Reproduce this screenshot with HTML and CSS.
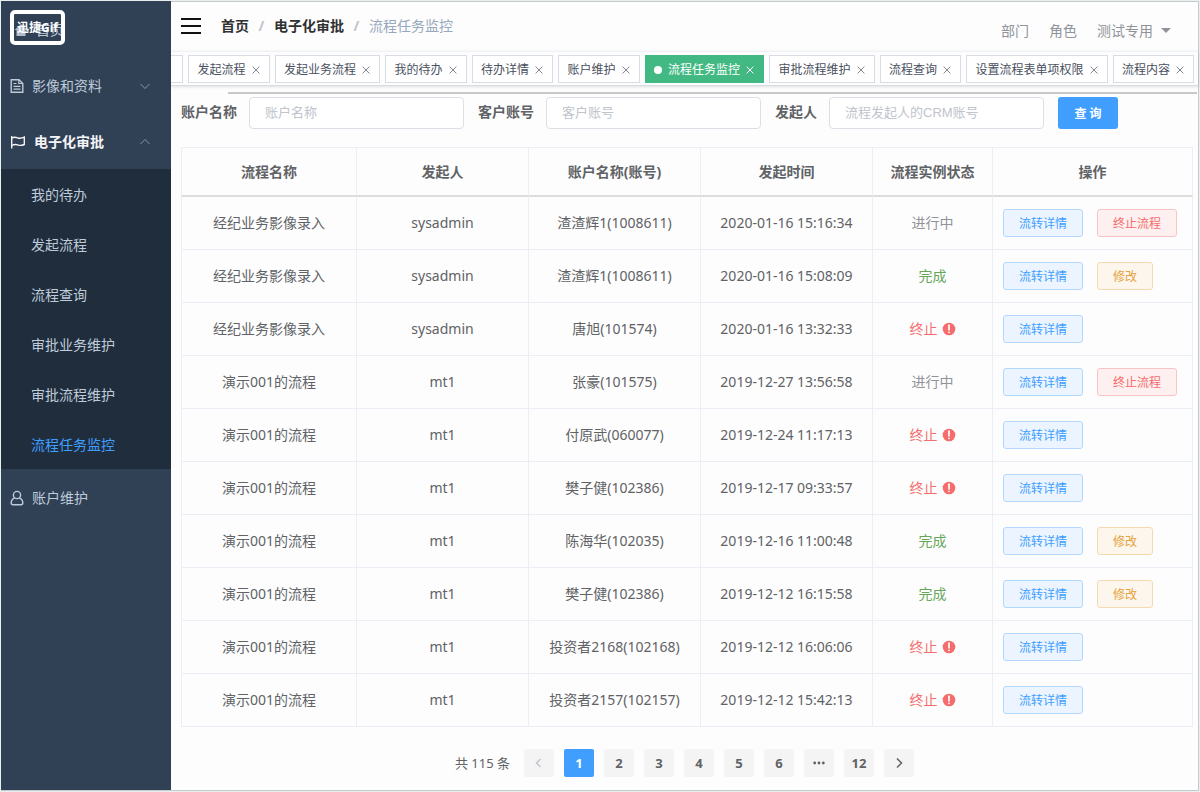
FILE: index.html
```
<!DOCTYPE html>
<html lang="zh-CN">
<head>
    <meta charset="UTF-8">
    <meta name="viewport" content="width=device-width, initial-scale=1.0">
    <title>流程任务监控</title>
    <link rel="stylesheet" href="styles.css">
</head>
<body>

<svg class="sprite" width="0" height="0">
    <symbol id="i-down" viewBox="0 0 12 12"><path d="M1.5 4 6 8.5 10.5 4" fill="none" stroke="currentColor"/></symbol>
    <symbol id="i-up" viewBox="0 0 12 12"><path d="M1.5 8 6 3.5 10.5 8" fill="none" stroke="currentColor"/></symbol>
    <symbol id="i-close" viewBox="0 0 8 8"><path d="M.6.6 7.4 7.4M7.4.6.6 7.4" fill="none" stroke="currentColor"/></symbol>
    <symbol id="i-warn" viewBox="0 0 14 14"><circle cx="7" cy="7" r="6.3" fill="currentColor"/><path d="M7 3.2V7.8" stroke="#fff" stroke-width="1.7" stroke-linecap="round"/><circle cx="7" cy="10.3" r=".9" fill="#fff"/></symbol>
</svg>

<div class="app">
    <nav class="sidebar">
        <div class="logo">
            <a class="home" href="#">
                <svg width="14" height="14" viewBox="0 0 14 14"><path d="M7 1 13.5 7H11.5V13H2.5V7H.5Z" fill="#b4bccc"/></svg>
                首页
            </a>
            <span class="mark">迅捷Gif</span>
        </div>
        <a class="menu-item" href="#">
            <svg width="14" height="16" viewBox="0 0 14 16" fill="none" stroke="currentColor" stroke-width="1.4"><path d="M1.2 1.7H9L12.8 5.5V14.3H1.2Z"/><path d="M8.8 1.7V5.5H12.8M3.5 5.5H6.5M3.5 8.3H10.5M3.5 11.2H10.5" stroke-width="1.2"/></svg>
            <span>影像和资料</span>
            <svg class="arrow" width="12" height="12"><use href="#i-down"/></svg>
        </a>
        <a class="menu-item opened" href="#">
            <svg width="16" height="14" viewBox="0 0 16 14" fill="none" stroke="currentColor" stroke-width="1.4"><path d="M1.7 1V13.5"/><path d="M1.7 3.2C4 1.8 5.5 2 7.500 2.800S11.500 3.500 14.300 2.200V9.500C11.500 10.800 9.500 10.500 7.500 9.800S4 9.300 1.700 10.500"/></svg>
            <span>电子化审批</span>
            <svg class="arrow" width="12" height="12"><use href="#i-up"/></svg>
        </a>
        <div class="submenu">
            <a href="#">我的待办</a>
            <a href="#">发起流程</a>
            <a href="#">流程查询</a>
            <a href="#">审批业务维护</a>
            <a href="#">审批流程维护</a>
            <a href="#" class="current">流程任务监控</a>
        </div>
        <a class="menu-item" href="#">
            <svg width="14" height="16" viewBox="0 0 14 16" fill="none" stroke="currentColor" stroke-width="1.4"><circle cx="7" cy="5" r="3.6"/><path d="M4.7 7.8C2.5 8.8 1.2 10.5 1.2 12.8C1.2 14.2 1.7 14.7 3 14.7H11C12.3 14.7 12.8 14.2 12.8 12.8C12.8 10.5 11.5 8.8 9.3 7.8"/></svg>
            <span>账户维护</span>
        </a>
    </nav>

    <main class="main">
        <header class="navbar">
            <button class="hamburger" aria-label="菜单"><i></i><i></i><i></i></button>
            <div class="breadcrumb">
                <a href="#">首页</a><b>/</b><a href="#">电子化审批</a><b>/</b><span>流程任务监控</span>
            </div>
            <div class="user">
                <span>部门</span>
                <span>角色</span>
                <button class="user-name">测试专用 <i class="caret"></i></button>
            </div>
        </header>

        <div class="tags" id="tags"></div>

        <div class="scroll-line"></div>

        <div class="content">
            <form class="filter">
                <label for="account">账户名称</label>
                <input type="text" id="account" placeholder="账户名称">
                <label for="client">客户账号</label>
                <input type="text" id="client" placeholder="客户账号">
                <label for="starter">发起人</label>
                <input type="text" id="starter" placeholder="流程发起人的CRM账号">
                <button type="button" class="search-btn">查 询</button>
            </form>

            <table>
                <colgroup>
                    <col class="col-name"><col class="col-mid"><col class="col-mid"><col class="col-mid"><col class="col-state"><col class="col-action">
                </colgroup>
                <thead>
                    <tr>
                        <th>流程名称</th>
                        <th>发起人</th>
                        <th>账户名称(账号)</th>
                        <th>发起时间</th>
                        <th>流程实例状态</th>
                        <th>操作</th>
                    </tr>
                </thead>
                <tbody id="rows"></tbody>
            </table>

            <div class="pagination">
                <span class="total">共 115 条</span>
                <button disabled aria-label="上一页"><svg width="12" height="12" viewBox="0 0 12 12"><path d="M7.5 2 3.5 6 7.5 10" fill="none" stroke="currentColor" stroke-width="1.5"/></svg></button>
                <button class="active">1</button>
                <button>2</button>
                <button>3</button>
                <button>4</button>
                <button>5</button>
                <button>6</button>
                <button aria-label="更多"><svg width="12" height="12" viewBox="0 0 12 12" fill="currentColor"><circle cx="1.7" cy="6" r="1.4"/><circle cx="6" cy="6" r="1.4"/><circle cx="10.3" cy="6" r="1.4"/></svg></button>
                <button>12</button>
                <button aria-label="下一页"><svg width="12" height="12" viewBox="0 0 12 12"><path d="M4 1.5 8.5 6 4 10.5" fill="none" stroke="currentColor" stroke-width="1.5"/></svg></button>
            </div>
        </div>
    </main>
</div>

<script src="script.js"></script>
</body>
</html>
```
FILE: styles.css
```
* {
    box-sizing: border-box;
}
html {
    background: #e9eeef;
}
body {
    margin: 0;
    padding: 1px;
    font-family: "Noto Sans", "Noto Sans CJK SC", sans-serif;
    font-size: 14px;
    line-height: 20px;
    color: #606266;
}
a {
    text-decoration: none;
    color: inherit;
}
button, input {
    font-family: inherit;
    margin: 0;
}
button {
    border: none;
    padding: 0;
    background: none;
    cursor: pointer;
}
svg {
    display: block;
    flex: none;
}
.sprite {
    position: absolute;
}
.app {
    display: flex;
    min-height: calc(100vh - 2px);
    background: #fdfdfd;
    border-right: 1px solid #c6cacd;
    border-bottom: 1px solid #c6cacd;
}

/* sidebar */
.sidebar {
    flex: none;
    width: 170px;
    background: #304156;
    color: #bfcbd9;
}
.logo {
    position: relative;
    height: 56px;
    padding: 9px;
}
.home {
    display: flex;
    align-items: center;
    gap: 8px;
    width: 55px;
    height: 39px;
    padding-left: 4px;
    overflow: hidden;
    white-space: nowrap;
}
.mark {
    position: absolute;
    left: 9px;
    top: 9px;
    width: 55px;
    height: 35px;
    border: 4px solid #fff;
    border-radius: 5px;
    color: #fff;
    font-size: 12px;
    font-weight: bold;
    line-height: 28px;
    text-align: center;
    white-space: nowrap;
}
.menu-item {
    display: flex;
    align-items: center;
    gap: 8px;
    height: 56px;
    padding: 2px 20px 0 9px;
}
.menu-item.opened {
    color: #f4f4f5;
    font-weight: bold;
}
.arrow {
    margin-left: auto;
    color: #909399;
}
.submenu {
    background: #1f2d3d;
}
.submenu a {
    display: block;
    height: 50px;
    padding-left: 30px;
    line-height: 52px;
}
.submenu .current {
    color: #409eff;
}

/* top bar */
.main {
    flex: 1;
    min-width: 0;
    border-top: 1px solid #c6cacd;
}
.navbar {
    display: flex;
    align-items: center;
    height: 49px;
    padding: 0 27px 2px 10px;
}
.hamburger {
    display: flex;
    flex-direction: column;
    gap: 5px;
    width: 20px;
    margin-right: 20px;
}
.hamburger i {
    height: 2px;
    background: #111;
}
.breadcrumb {
    display: flex;
    color: #97a8be;
}
.breadcrumb a {
    color: #303133;
    font-weight: bold;
}
.breadcrumb b {
    width: 25px;
    text-align: center;
    color: #c0c4cc;
}
.user {
    display: flex;
    gap: 20px;
    margin-left: auto;
    padding-top: 10px;
    color: #909399;
}
.user-name {
    display: flex;
    align-items: center;
    gap: 8px;
    font-size: 14px;
    line-height: 20px;
    color: inherit;
}
.caret {
    border: 5px solid transparent;
    border-top-color: #909399;
    border-bottom: none;
}

/* opened pages */
.tags {
    display: flex;
    justify-content: space-between;
    gap: 5px;
    height: 35px;
    padding: 3px 4px 3px 0;
    border-top: 1px solid #f0f1f3;
    border-bottom: 1px solid #d8dce5;
    box-shadow: 0 1px 3px rgba(0, 0, 0, .12);
    overflow: hidden;
}
.tag {
    display: flex;
    flex: none;
    align-items: center;
    gap: 6px;
    height: 28px;
    padding: 1px 9px 0 8px;
    border: 1px solid #d8dce5;
    background: #fff;
    color: #495060;
    font-size: 12px;
    white-space: nowrap;
}
.tag.scrolled {
    width: 12px;
    padding: 0;
    border-left: none;
}
.tag.active {
    border-color: #42b983;
    background: #42b983;
    color: #fff;
}
.tag .dot {
    width: 8px;
    height: 8px;
    border-radius: 50%;
    background: #fff;
}
.tag svg {
    color: #80858f;
}
.tag.active svg {
    color: #fff;
}
.scroll-line {
    height: 2px;
    margin: 6px 1px 0 57px;
    background: #c8c8c8;
}

/* filter form */
.content {
    padding: 3px 5px 0 10px;
}
.filter {
    display: flex;
    align-items: center;
    margin-bottom: 18px;
}
.filter label {
    margin-right: 12px;
    padding-bottom: 2px;
    font-weight: bold;
    white-space: nowrap;
}
.filter input {
    flex: 0 1 215px;
    min-width: 0;
    height: 32px;
    margin-right: 14px;
    padding: 0 15px 2px;
    border: 1px solid #dcdfe6;
    border-radius: 4px;
    background: #fff;
    font-family: "Liberation Sans", "Noto Sans CJK SC", sans-serif;
    font-size: 13px;
}
.filter input::placeholder {
    color: #c0c4cc;
}
.search-btn {
    width: 60px;
    height: 32px;
    border-radius: 3px;
    background: #409eff;
    color: #fff;
    font-size: 12px;
    font-weight: bold;
}

/* table */
table {
    width: 100%;
    table-layout: fixed;
    border-collapse: separate;
    border-spacing: 0;
    border: solid #ebeef5;
    border-width: 1px 0 0 1px;
}
.col-name {
    width: 175px;
}
.col-mid {
    width: 172px;
}
.col-state {
    width: 120px;
}
.col-action {
    width: 200px;
}
th, td {
    height: 53px;
    padding: 0 10px;
    border: solid #ebeef5;
    border-width: 0 1px 1px 0;
    text-align: center;
    white-space: nowrap;
}
th {
    height: 49px;
    padding: 0;
    border-bottom: 2px solid #dcdcdc;
}
.state {
    display: flex;
    align-items: center;
    justify-content: center;
    gap: 4px;
}
.running {
    color: #909399;
}
.done {
    color: #67a75a;
}
.stopped {
    color: #f56c6c;
}
.actions {
    display: flex;
    gap: 14px;
}
.btn {
    height: 28px;
    padding: 0 15px;
    border: 1px solid #b3d8ff;
    border-radius: 3px;
    background: #ecf5ff;
    color: #409eff;
    font-size: 12px;
}
.btn.danger {
    border-color: #fbc4c4;
    background: #fef0f0;
    color: #f56c6c;
}
.btn.warning {
    border-color: #f5dab1;
    background: #fdf6ec;
    color: #e6a23c;
}

/* pagination */
.pagination {
    display: flex;
    align-items: center;
    justify-content: center;
    gap: 10px;
    margin: 22px 5px 0 0;
    font-size: 13px;
}
.total {
    margin-right: 4px;
}
.pagination button {
    display: flex;
    align-items: center;
    justify-content: center;
    width: 30px;
    height: 28px;
    border-radius: 2px;
    background: #f4f4f5;
    color: #606266;
    font-size: 13px;
    font-weight: bold;
}
.pagination button:disabled {
    color: #c0c4cc;
}
.pagination .active {
    background: #409eff;
    color: #fff;
}
```
FILE: script.js
```
const tags = ["发起流程", "发起业务流程", "我的待办", "待办详情", "账户维护", "流程任务监控",
    "审批流程维护", "流程查询", "设置流程表单项权限", "流程内容"];
const current = "流程任务监控";

const rows = [
    ["经纪业务影像录入", "sysadmin", "渣渣辉1(1008611)", "2020-01-16 15:16:34", "running"],
    ["经纪业务影像录入", "sysadmin", "渣渣辉1(1008611)", "2020-01-16 15:08:09", "done"],
    ["经纪业务影像录入", "sysadmin", "唐旭(101574)", "2020-01-16 13:32:33", "stopped"],
    ["演示001的流程", "mt1", "张豪(101575)", "2019-12-27 13:56:58", "running"],
    ["演示001的流程", "mt1", "付原武(060077)", "2019-12-24 11:17:13", "stopped"],
    ["演示001的流程", "mt1", "樊子健(102386)", "2019-12-17 09:33:57", "stopped"],
    ["演示001的流程", "mt1", "陈海华(102035)", "2019-12-16 11:00:48", "done"],
    ["演示001的流程", "mt1", "樊子健(102386)", "2019-12-12 16:15:58", "done"],
    ["演示001的流程", "mt1", "投资者2168(102168)", "2019-12-12 16:06:06", "stopped"],
    ["演示001的流程", "mt1", "投资者2157(102157)", "2019-12-12 15:42:13", "stopped"]
];

const states = {
    running: { text: "进行中", button: '<button class="btn danger">终止流程</button>' },
    done: { text: "完成", button: '<button class="btn warning">修改</button>' },
    stopped: { text: "终止", icon: '<svg width="14" height="14"><use href="#i-warn"/></svg>' }
};

// the first tag is mostly scrolled out on the left
document.getElementById("tags").innerHTML = '<i class="tag scrolled"></i>' + tags.map(name => {
    const active = name === current;
    return `<a href="#" class="tag${active ? " active" : ""}">${active ? '<i class="dot"></i>' : ""}${name}<svg width="8" height="8"><use href="#i-close"/></svg></a>`;
}).join("");

document.getElementById("rows").innerHTML = rows.map(row => {
    const state = states[row[4]];
    return `<tr>
        <td>${row[0]}</td>
        <td>${row[1]}</td>
        <td>${row[2]}</td>
        <td>${row[3]}</td>
        <td><div class="state ${row[4]}">${state.text}${state.icon || ""}</div></td>
        <td><div class="actions"><button class="btn">流转详情</button>${state.button || ""}</div></td>
    </tr>`;
}).join("");
```
